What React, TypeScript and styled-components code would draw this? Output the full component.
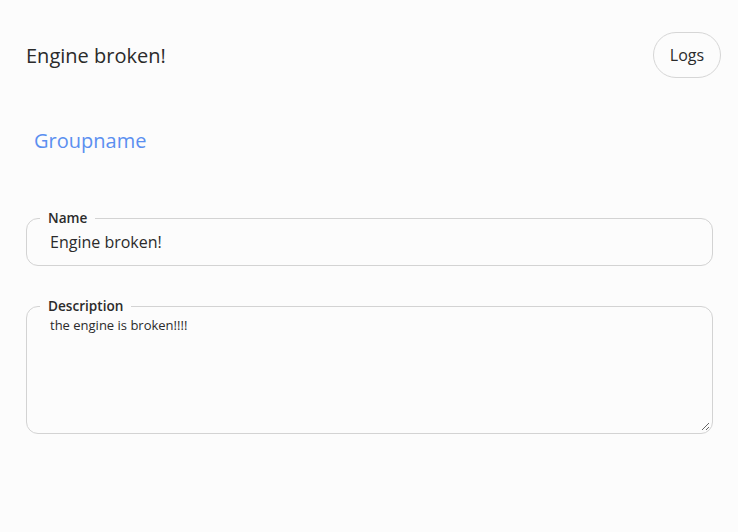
import React from "react";
import styled, { createGlobalStyle } from "styled-components";

const Global = createGlobalStyle`
  html, body { margin: 0; padding: 0; background: #fcfcfc; }
  body { font-family: "Open Sans", "Liberation Sans", sans-serif; color: #2b2b2b; }
`;

const Page = styled.div`
  width: 738px;
  height: 532px;
  box-sizing: border-box;
  padding: 32px 17px 0 26px;
  display: flex;
  flex-direction: column;
`;

const Header = styled.div`
  display: flex;
  align-items: center;
  justify-content: space-between;
  height: 46px;
`;

const Title = styled.h1`
  margin: 0;
  font-size: 20px;
  font-weight: 400;
  color: #2b2b2b;
`;

const Pill = styled.button`
  width: 68px;
  height: 46px;
  border-radius: 23px;
  border: 1px solid #d6d6d6;
  background: #fcfcfc;
  font-family: inherit;
  font-size: 16px;
  color: #2b2b2b;
  padding: 0;
  cursor: pointer;
`;

const Group = styled.a`
  margin: 49px 0 0 8px;
  font-size: 20px;
  color: #5b8ff0;
  line-height: 28px;
  text-decoration: none;
`;

const Field = styled.fieldset<{ $height: number; $top: number }>`
  margin: ${(p) => p.$top}px 8px 0 0;
  padding: 0 0 0 13px;
  border: 1px solid #d3d3d3;
  border-radius: 12px;
  height: ${(p) => p.$height}px;
  box-sizing: border-box;
  display: flex;
  flex-direction: column;
  min-width: 0;
`;

const Legend = styled.legend`
  font-size: 13.6px;
  font-weight: 600;
  color: #2b2b2b;
  padding: 0 8px 0 8px;
  line-height: 16px;
`;

const Input = styled.input`
  border: none;
  outline: none;
  background: transparent;
  font-family: inherit;
  font-size: 16px;
  color: #2b2b2b;
  padding: 0 0 0 10px;
  margin: 4px 0 0 0;
  height: 24px;
`;

const TextArea = styled.textarea`
  border: none;
  outline: none;
  background: transparent;
  font-family: inherit;
  font-size: 13px;
  color: #2b2b2b;
  padding: 0 0 0 10px;
  margin: 2px 2px 0 0;
  height: 115px;
  box-sizing: border-box;
  line-height: 18px;
  resize: vertical;
`;

export default function App() {
  return (
    <>
      <Global />
      <Page>
        <Header>
          <Title>Engine broken!</Title>
          <Pill>Logs</Pill>
        </Header>
        <Group>Groupname</Group>
        <Field $top={55} $height={56}>
          <Legend>Name</Legend>
          <Input defaultValue="Engine broken!" />
        </Field>
        <Field $top={32} $height={136}>
          <Legend>Description</Legend>
          <TextArea defaultValue="the engine is broken!!!!" />
        </Field>
      </Page>
    </>
  );
}
